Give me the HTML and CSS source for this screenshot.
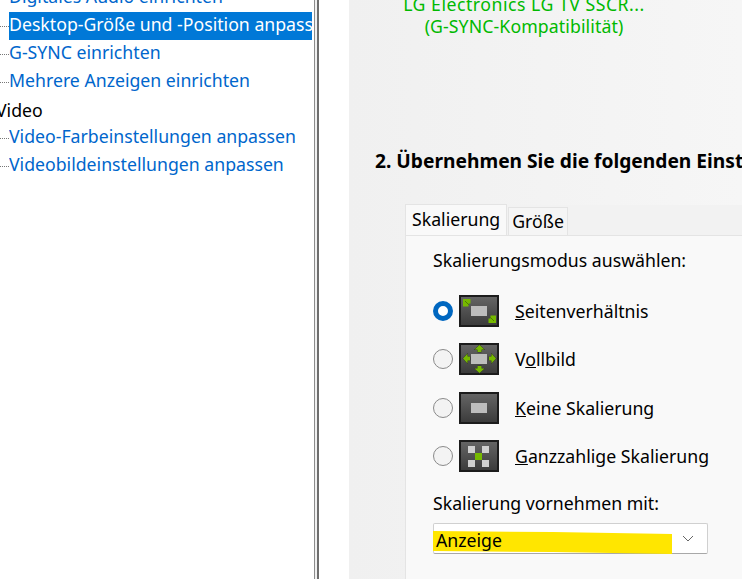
FILE: index.html
```html
<!DOCTYPE html>
<html>
<head>
  <link rel="stylesheet" href="styles.css">
</head>
<body>
  <svg class="icon-defs" width="0" height="0">
    <defs>
      <linearGradient id="screenBg" x1="0" y1="0" x2="0" y2="1">
        <stop offset="0" stop-color="#666"/>
        <stop offset="1" stop-color="#3a3a3a"/>
      </linearGradient>
    </defs>
  </svg>

  <!-- Navigation tree -->
  <div class="tree">
    <div class="tree-row"><span class="tree-link">Digitales Audio einrichten</span></div>
    <div class="tree-row"><span class="tree-link selected">Desktop-Größe und -Position anpassen</span></div>
    <div class="tree-row"><span class="tree-link">G-SYNC einrichten</span></div>
    <div class="tree-row"><span class="tree-link">Mehrere Anzeigen einrichten</span></div>
    <div class="tree-group">Video</div>
    <div class="tree-row"><span class="tree-link">Video-Farbeinstellungen anpassen</span></div>
    <div class="tree-row"><span class="tree-link">Videobildeinstellungen anpassen</span></div>
  </div>

  <div class="splitter"></div>
  <div class="gutter"></div>

  <!-- Settings content -->
  <div class="main">
    <div class="display-name">
      <div class="display-model">LG Electronics LG TV SSCR...</div>
      <div class="display-sync">(G-SYNC-Kompatibilität)</div>
    </div>

    <h3 class="step-title">2. Übernehmen Sie die folgenden Einstellungen</h3>

    <div class="tabs">
      <div class="tab active">Skalierung</div>
      <div class="tab">Größe</div>
    </div>

    <div class="tab-panel">
      <div class="field-label">Skalierungsmodus auswählen:</div>

      <div class="mode-list">
        <label class="mode">
          <input type="radio" name="mode" checked>
          <svg class="mode-icon" viewBox="0 0 40 32">
            <rect x="1" y="1" width="38" height="30" fill="url(#screenBg)" stroke="#1c1c1c" stroke-width="2"/>
            <rect x="12" y="11" width="16" height="10" fill="#bdbdbd"/>
            <path d="M4 4h7.500v4.500H9.500v3H4z" fill="#76b900"/>
            <path d="M37 28h-7.500v-4.500h2v-3H37z" fill="#76b900"/>
            <path d="M6 6l4 4M35 26l-4-4" stroke="#4f7d00" stroke-width="1"/>
          </svg>
          <span><u>S</u>eitenverhältnis</span>
        </label>
        <label class="mode">
          <input type="radio" name="mode">
          <svg class="mode-icon" viewBox="0 0 40 32">
            <rect x="1" y="1" width="38" height="30" fill="url(#screenBg)" stroke="#1c1c1c" stroke-width="2"/>
            <rect x="12" y="11" width="16" height="10" fill="#bdbdbd"/>
            <g fill="#76b900" stroke="#333" stroke-width="1" paint-order="stroke">
              <path d="M20.500 2l5 4.500h-3v2.500h-4V6.500h-3z"/>
              <path d="M20.500 30l5-4.500h-3V23h-4v2.500h-3z"/>
              <path d="M4 15.500l4.500-5v3H11v4H8.500v3z"/>
              <path d="M37 15.500l-4.500-5v3H30v4h2.500v3z"/>
            </g>
          </svg>
          <span>V<u>o</u>llbild</span>
        </label>
        <label class="mode">
          <input type="radio" name="mode">
          <svg class="mode-icon" viewBox="0 0 40 32">
            <rect x="1" y="1" width="38" height="30" fill="url(#screenBg)" stroke="#1c1c1c" stroke-width="2"/>
            <rect x="12" y="11" width="16" height="10" fill="#bdbdbd"/>
          </svg>
          <span><u>K</u>eine Skalierung</span>
        </label>
        <label class="mode">
          <input type="radio" name="mode">
          <svg class="mode-icon" viewBox="0 0 40 32">
            <rect x="1" y="1" width="38" height="30" fill="url(#screenBg)" stroke="#1c1c1c" stroke-width="2"/>
            <rect x="9" y="6" width="7" height="7" fill="#cfcfcf"/>
            <rect x="23" y="6" width="7" height="7" fill="#cfcfcf"/>
            <rect x="9" y="20" width="7" height="7" fill="#cfcfcf"/>
            <rect x="23" y="20" width="7" height="7" fill="#cfcfcf"/>
            <rect x="16" y="13" width="7" height="7" fill="#76b900"/>
          </svg>
          <span><u>G</u>anzzahlige Skalierung</span>
        </label>
      </div>

      <div class="field-label scale-label">Skalierung vornehmen mit:</div>
      <div class="select">
        <svg class="marker" viewBox="0 0 240 24" preserveAspectRatio="none">
          <path d="M0 1L120 2L239 4L239 24L120 22L0 21z" fill="#ffe600"/>
        </svg>
        <span class="select-value">Anzeige</span>
        <svg class="chevron" viewBox="0 0 12 7">
          <path d="M1 1l5 5 5-5" fill="none" stroke="#666" stroke-width="1"/>
        </svg>
      </div>
    </div>
  </div>
</body>
</html>
```

FILE: styles.css
```css
html, body {
  height: 100%;
}
body {
  margin: 0;
  display: flex;
  overflow: hidden;
  background: #fff;
  font-family: "Noto Sans", sans-serif;
  font-size: 17.700px;
  color: #000;
}
.icon-defs {
  position: absolute;
}

/* tree */
.tree {
  width: 314px;
  flex: none;
  margin-top: -16px;
  overflow: hidden;
  white-space: nowrap;
}
.tree-row {
  height: 28px;
  padding-left: 9px;
  background: repeating-linear-gradient(90deg, #777 0 1px, transparent 1px 2px) 0 14px / 9px 1px no-repeat;
}
.tree-link {
  display: block;
  box-sizing: border-box;
  width: 303px;
  height: 28px;
  line-height: 25px;
  overflow: hidden;
  color: #0066cc;
}
.tree-link.selected {
  background: #0078d7;
  color: #fff;
}
.tree-group {
  height: 28px;
  line-height: 28px;
  margin-left: -4px;
}

/* splitter */
.splitter {
  width: 5px;
  flex: none;
  box-sizing: border-box;
  background: #f0f0f0;
  border-left: 1px solid #8c8c8c;
  border-right: 2px solid #6e6e6e;
}
.gutter {
  width: 30px;
  flex: none;
}

/* main */
.main {
  flex: 1;
  min-width: 0;
  overflow: hidden;
  white-space: nowrap;
  background: linear-gradient(90deg, #f0f0f0, #f6f6f6);
}
.display-name {
  width: 350px;
  margin-top: -7px;
  text-align: center;
  line-height: 22px;
  color: #00b900;
}
.display-model {
  letter-spacing: 0.500px;
}
.display-sync {
  letter-spacing: 0.100px;
}
.step-title {
  margin: 111px 0 0 26px;
  font-size: 19.200px;
  line-height: 26px;
  font-weight: 700;
}

.tabs {
  display: flex;
  align-items: flex-end;
  height: 30px;
  margin: 31px 0 0 56px;
  background: #f2f2f2;
}
.tab {
  height: 27px;
  line-height: 26px;
  padding: 0 3px;
  margin-left: 1px;
  background: #f5f5f5;
  border: 1px solid #e4e4e4;
  border-bottom: none;
}
.tab.active {
  height: 30px;
  line-height: 28px;
  padding: 0 6px;
  margin-left: 0;
  background: #f9f9f9;
}
.tab-panel {
  margin-left: 56px;
  height: 400px;
  padding: 11px 0 0 27px;
  background: #f9f9f9;
  border-left: 1px solid #e4e4e4;
  border-top: 1px solid #e4e4e4;
}
.field-label {
  height: 26px;
  line-height: 26px;
}
.mode-list {
  margin-top: 14px;
}
.mode {
  display: flex;
  align-items: center;
  height: 48.250px;
}
.mode input {
  appearance: none;
  width: 20px;
  height: 20px;
  margin: 0 6px 0 0;
  background: #f3f3f3;
  border: 1px solid #8a8a8a;
  border-radius: 50%;
}
.mode input:checked {
  background: #fff;
  border: 5px solid #0067c0;
}
.mode-icon {
  width: 40px;
  height: 32px;
  margin-right: 16px;
}
.scale-label {
  margin-top: 10px;
}
.select {
  position: relative;
  display: flex;
  align-items: center;
  justify-content: space-between;
  box-sizing: border-box;
  width: 275px;
  height: 31px;
  margin-top: 7px;
  padding: 0 13px 0 2px;
  background: #fff;
  border: 1px solid #d0d0d0;
  border-bottom-color: #a8a8a8;
  border-radius: 2px;
}
.marker {
  position: absolute;
  left: -1px;
  top: 6px;
  width: 240px;
  height: 24px;
}
.select-value {
  position: relative;
  top: 1px;
}
.chevron {
  width: 12px;
  height: 7px;
}
```
